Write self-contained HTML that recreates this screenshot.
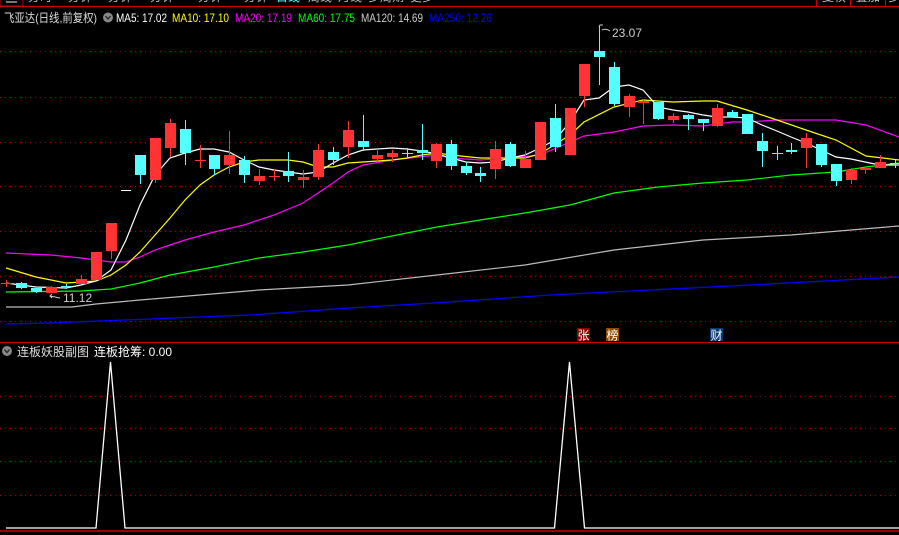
<!DOCTYPE html>
<html><head><meta charset="utf-8"><style>
html,body{margin:0;padding:0;background:#000;width:899px;height:535px;overflow:hidden}
svg{display:block}
text{font-family:"Liberation Sans","Noto Sans CJK SC",sans-serif}
</style></head><body>
<svg width="899" height="535" viewBox="0 0 899 535" xmlns="http://www.w3.org/2000/svg">
<rect width="899" height="535" fill="#000"/>
<!-- top tab bar -->
<g fill="#bbb" font-size="12">
<text x="28" y="1">分时</text><text x="68" y="1">分钟</text><text x="108" y="1">分钟</text><text x="150" y="1">分钟</text><text x="198" y="1">分钟</text><text x="244" y="1">分钟</text><text x="276" y="1" fill="#5ff">日线</text><text x="308" y="1">周线</text><text x="338" y="1">月线</text><text x="368" y="1">多周期</text><text x="410" y="1">更多</text>
<text x="822" y="1">复权</text><text x="856" y="1">叠加</text><text x="888" y="1">多</text>
</g>
<rect x="0" y="-1" width="23" height="7" fill="none" stroke="#c00" stroke-width="1"/>
<rect x="6" y="1" width="11" height="2" fill="#777"/>
<line x1="0" y1="6.5" x2="899" y2="6.5" stroke="#c00"/>
<line x1="816.5" y1="0" x2="816.5" y2="6" stroke="#c00"/>
<line x1="850.5" y1="0" x2="850.5" y2="6" stroke="#c00"/>
<line x1="885.5" y1="0" x2="885.5" y2="6" stroke="#c00"/>

<!-- grid -->
<g stroke="#a00" stroke-dasharray="1 4" stroke-width="1">
<line x1="0" y1="51.5" x2="899" y2="51.5"/>
<line x1="0" y1="97.5" x2="899" y2="97.5"/>
<line x1="0" y1="142.5" x2="899" y2="142.5"/>
<line x1="0" y1="186.5" x2="899" y2="186.5"/>
<line x1="0" y1="231.5" x2="899" y2="231.5"/>
<line x1="0" y1="276.5" x2="899" y2="276.5"/>
<line x1="0" y1="321.5" x2="899" y2="321.5"/>
<line x1="0" y1="396.5" x2="899" y2="396.5"/>
<line x1="0" y1="428.5" x2="899" y2="428.5"/>
<line x1="0" y1="461.5" x2="899" y2="461.5"/>
<line x1="0" y1="495.5" x2="899" y2="495.5"/>
</g>

<!-- legend -->
<g font-size="12">
<text x="4" y="22" fill="#ddd" textLength="93" lengthAdjust="spacingAndGlyphs">飞亚达(日线,前复权)</text>
<circle cx="108" cy="17.5" r="5" fill="#888"/>
<path d="M105.5 16 L108 19 L110.5 16" stroke="#222" stroke-width="1.3" fill="none"/>
<text x="116" y="22" fill="#fff" textLength="51" lengthAdjust="spacingAndGlyphs">MA5: 17.02</text>
<text x="172" y="22" fill="#ff0" textLength="57" lengthAdjust="spacingAndGlyphs">MA10: 17.10</text>
<text x="235" y="22" fill="#f0f" textLength="57" lengthAdjust="spacingAndGlyphs">MA20: 17.19</text>
<text x="298" y="22" fill="#0f0" textLength="57" lengthAdjust="spacingAndGlyphs">MA60: 17.75</text>
<text x="361" y="22" fill="#ccc" textLength="62" lengthAdjust="spacingAndGlyphs">MA120: 14.69</text>
<text x="429" y="22" fill="#00f" textLength="63" lengthAdjust="spacingAndGlyphs">MA250: 12.26</text>
</g>

<!-- MA lines -->
<g fill="none" stroke-width="1.2">
<polyline stroke="#00f" points="6,324 50,323 150,319 250,315 350,308 450,302 550,295 650,290 750,285 899,277"/>
<polyline stroke="#bbb" points="6,307 72,307 96,304 140,300 200,295 259,290 348,285 437,275 525,265 614,250 703,240 791,235 899,226"/>
<polyline stroke="#0f0" points="6,292 81,291 111,289 140,283 170,275 214,267 259,258 303,252 348,245 392,236 437,227 480,220 525,213 570,205 614,193 658,187 703,183 747,180 791,175 836,172 866,167 899,163"/>
<polyline stroke="#f0f" points="6,253 51,255 81,258 111,262 126,262 140,257 155,250 170,245 185,240 214,232 244,225 274,215 303,203 318,193 333,183 348,172 363,165 392,160 437,155 451,158 480,160 510,158 540,155 570,142 584,136 614,132 643,126 673,125 703,126 732,122 747,122 777,120 806,120 836,120 866,125 899,137"/>
<polyline stroke="#ff0" points="6,268 36,277 66,283 81,282 96,281 111,275 126,265 140,252 155,235 170,218 185,200 200,185 214,175 229,167 244,162 259,160 274,160 288,160 303,162 318,167 333,167 348,163 363,162 377,161 392,160 407,158 422,155 437,153 451,155 480,158 525,158 540,154 570,135 584,122 614,107 643,100 673,102 703,101 717,101 747,110 777,120 806,130 836,140 866,156 899,160"/>
<polyline stroke="#fff" points="6,283 36,287 66,288 81,285 96,281 111,270 126,240 140,205 155,175 170,158 185,153 200,149 214,149 229,152 244,160 259,167 274,170 288,172 303,174 318,172 333,163 348,155 363,150 377,149 392,148 407,149 422,151 437,154 451,158 466,162 480,163 495,162 510,158 525,155 540,148 555,140 570,122 584,100 599,98 614,87 629,85 643,90 658,107 673,110 688,112 703,115 717,117 732,117 747,118 762,125 777,131 791,137 806,143 821,150 836,157 851,159 865,162 880,165 899,165"/>
</g>

<!-- candles: wicks -->
<g stroke-width="1" shape-rendering="crispEdges">
<g stroke="#ff3333">
<line x1="6.5" y1="280" x2="6.5" y2="287"/><line x1="51.5" y1="286" x2="51.5" y2="293"/><line x1="81.5" y1="275" x2="81.5" y2="284"/><line x1="111.5" y1="223" x2="111.5" y2="259"/><line x1="155.5" y1="138" x2="155.5" y2="183"/><line x1="170.5" y1="119" x2="170.5" y2="157"/><line x1="200.5" y1="145" x2="200.5" y2="168"/><line x1="229.5" y1="131" x2="229.5" y2="174"/><line x1="259.5" y1="169" x2="259.5" y2="185"/><line x1="274.5" y1="169" x2="274.5" y2="181"/><line x1="303.5" y1="170" x2="303.5" y2="188"/><line x1="318.5" y1="144" x2="318.5" y2="180"/><line x1="348.5" y1="121" x2="348.5" y2="158"/><line x1="377.5" y1="149" x2="377.5" y2="163"/><line x1="392.5" y1="150" x2="392.5" y2="162"/><line x1="436.5" y1="143" x2="436.5" y2="168"/><line x1="495.5" y1="141" x2="495.5" y2="179"/><line x1="525.5" y1="151" x2="525.5" y2="168"/><line x1="584.5" y1="64" x2="584.5" y2="107"/><line x1="629.5" y1="94" x2="629.5" y2="117"/><line x1="643.5" y1="99" x2="643.5" y2="124"/><line x1="673.5" y1="113" x2="673.5" y2="123"/><line x1="717.5" y1="104" x2="717.5" y2="127"/><line x1="806.5" y1="133" x2="806.5" y2="168"/><line x1="851.5" y1="168" x2="851.5" y2="184"/><line x1="865.5" y1="167" x2="865.5" y2="174"/><line x1="880.5" y1="155" x2="880.5" y2="168"/>
</g>
<g stroke="#54ffff">
<line x1="21.5" y1="282" x2="21.5" y2="289"/><line x1="36.5" y1="288" x2="36.5" y2="293"/><line x1="66.5" y1="284" x2="66.5" y2="289"/><line x1="140.5" y1="155" x2="140.5" y2="184"/><line x1="185.5" y1="120" x2="185.5" y2="165"/><line x1="214.5" y1="155" x2="214.5" y2="175"/><line x1="244.5" y1="156" x2="244.5" y2="183"/><line x1="288.5" y1="152" x2="288.5" y2="182"/><line x1="333.5" y1="147" x2="333.5" y2="165"/><line x1="363.5" y1="115" x2="363.5" y2="151"/><line x1="407.5" y1="148" x2="407.5" y2="158"/><line x1="422.5" y1="124" x2="422.5" y2="160"/><line x1="451.5" y1="140" x2="451.5" y2="170"/><line x1="466.5" y1="162" x2="466.5" y2="175"/><line x1="480.5" y1="167" x2="480.5" y2="182"/><line x1="510.5" y1="142" x2="510.5" y2="167"/><line x1="555.5" y1="104" x2="555.5" y2="152"/><line x1="599.5" y1="26" x2="599.5" y2="85"/><line x1="614.5" y1="62" x2="614.5" y2="106"/><line x1="658.5" y1="102" x2="658.5" y2="120"/><line x1="688.5" y1="114" x2="688.5" y2="130"/><line x1="703.5" y1="119" x2="703.5" y2="131"/><line x1="732.5" y1="110" x2="732.5" y2="117"/><line x1="762.5" y1="133" x2="762.5" y2="167"/><line x1="777.5" y1="146" x2="777.5" y2="160"/><line x1="791.5" y1="143" x2="791.5" y2="154"/><line x1="821.5" y1="144" x2="821.5" y2="167"/><line x1="836.5" y1="164" x2="836.5" y2="186"/><line x1="895.5" y1="160" x2="895.5" y2="168"/>
</g>
</g>
<!-- candle bodies -->
<g fill="#ff3333" shape-rendering="crispEdges">
<rect x="1" y="283" width="11" height="1"/><rect x="46" y="287" width="11" height="6"/><rect x="76" y="279" width="11" height="5"/><rect x="91" y="252" width="11" height="28"/><rect x="106" y="223" width="11" height="28"/><rect x="150" y="138" width="11" height="42"/><rect x="165" y="123" width="11" height="25"/><rect x="195" y="160" width="11" height="1"/><rect x="224" y="155" width="11" height="10"/><rect x="254" y="176" width="11" height="5"/><rect x="269" y="176" width="11" height="1"/><rect x="298" y="177" width="11" height="3"/><rect x="313" y="150" width="11" height="27"/><rect x="343" y="130" width="11" height="17"/><rect x="372" y="155" width="11" height="4"/><rect x="387" y="153" width="11" height="4"/><rect x="431" y="144" width="11" height="17"/><rect x="490" y="149" width="11" height="20"/><rect x="520" y="159" width="11" height="9"/><rect x="535" y="122" width="11" height="38"/><rect x="565" y="108" width="11" height="47"/><rect x="579" y="64" width="11" height="32"/><rect x="624" y="96" width="11" height="11"/><rect x="638" y="101" width="11" height="2"/><rect x="668" y="116" width="11" height="4"/><rect x="712" y="108" width="11" height="18"/><rect x="801" y="138" width="11" height="10"/><rect x="846" y="170" width="11" height="10"/><rect x="860" y="168" width="11" height="2"/><rect x="875" y="162" width="11" height="6"/>
</g>
<g fill="#54ffff" shape-rendering="crispEdges">
<rect x="16" y="283" width="11" height="5"/><rect x="31" y="288" width="11" height="4"/><rect x="61" y="286" width="11" height="1"/><rect x="135" y="155" width="11" height="20"/><rect x="180" y="129" width="11" height="24"/><rect x="209" y="155" width="11" height="14"/><rect x="239" y="160" width="11" height="15"/><rect x="283" y="171" width="11" height="5"/><rect x="328" y="152" width="11" height="8"/><rect x="358" y="141" width="11" height="6"/><rect x="402" y="153" width="11" height="1"/><rect x="417" y="150" width="11" height="3"/><rect x="446" y="144" width="11" height="22"/><rect x="461" y="166" width="11" height="7"/><rect x="475" y="173" width="11" height="3"/><rect x="505" y="144" width="11" height="22"/><rect x="550" y="118" width="11" height="29"/><rect x="594" y="51" width="11" height="6"/><rect x="609" y="67" width="11" height="37"/><rect x="653" y="102" width="11" height="17"/><rect x="683" y="115" width="11" height="4"/><rect x="698" y="119" width="11" height="4"/><rect x="727" y="112" width="11" height="5"/><rect x="742" y="114" width="11" height="20"/><rect x="757" y="141" width="11" height="10"/><rect x="772" y="153" width="11" height="1"/><rect x="786" y="150" width="11" height="2"/><rect x="816" y="144" width="11" height="21"/><rect x="831" y="164" width="11" height="17"/><rect x="890" y="163" width="11" height="1"/>
</g>
<rect x="121" y="190" width="10" height="1" fill="#fff"/>

<!-- high/low labels -->
<path d="M599 27 L600 25 L603 25 M602 30 Q606 28 610 31" stroke="#ccc" fill="none" stroke-width="1"/>
<text x="612" y="37" fill="#ccc" font-size="12">23.07</text>
<path d="M52 294 L50 296 L52 298 M50 296 L60 298" stroke="#ccc" fill="none" stroke-width="1"/>
<text x="63" y="302" fill="#ccc" font-size="12">11.12</text>

<!-- tags -->
<rect x="577" y="328" width="13" height="13" fill="#8b0000"/>
<text x="577.5" y="339.5" fill="#fff" font-size="12">张</text>
<rect x="606" y="328" width="13" height="13" fill="#8b4a00"/>
<text x="606.5" y="339.5" fill="#fff" font-size="12">榜</text>
<rect x="710" y="328" width="13" height="13" fill="#0a3a70"/>
<text x="710.5" y="339.5" fill="#fff" font-size="12">财</text>

<!-- divider -->
<line x1="0" y1="342.5" x2="899" y2="342.5" stroke="#c00"/>

<!-- sub chart header -->
<circle cx="7" cy="351" r="5" fill="#888"/>
<path d="M4.5 349.5 L7 352.5 L9.5 349.5" stroke="#222" stroke-width="1.3" fill="none"/>
<text x="17" y="356" fill="#ddd" font-size="12" textLength="72" lengthAdjust="spacingAndGlyphs">连板妖股副图</text>
<text x="94" y="356" fill="#fff" font-size="12" textLength="78" lengthAdjust="spacingAndGlyphs">连板抢筹: 0.00</text>

<!-- sub chart line -->
<polyline fill="none" stroke="#fff" stroke-width="1.3" points="6,528 96,528 110.5,362 125,528 554.5,528 569.5,362 584.5,528 899,528"/>
<line x1="0" y1="531" x2="899" y2="531" stroke="#c00" stroke-width="1.5"/>
</svg>
</body></html>
